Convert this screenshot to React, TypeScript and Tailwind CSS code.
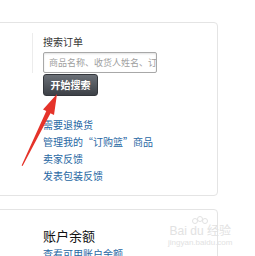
const links = ["需要退换货", "管理我的“订购篮”商品", "卖家反馈", "发表包装反馈"];

export default function App() {
    return (
        <div
            className="relative w-[255px] h-[256px] overflow-hidden bg-white"
            style={{ fontFamily: '"Noto Sans CJK SC", "Noto Sans", sans-serif' }}
        >
            <div className="pt-[22px] -ml-[6px] w-[224px] flex flex-col gap-[13px]">
                {/* order search card */}
                <div className="border border-[#e4e4e4] rounded-[4px] h-[174px] flex">
                    <div className="w-[38px] shrink-0 pt-[10px]">
                        <div className="h-[40px] border-r border-[#ececec]"></div>
                    </div>
                    <div className="pl-[10px] pt-[11px] flex flex-col items-start">
                        <div className="text-[10px] leading-[16px] text-[#333] mb-[2px]">搜索订单</div>
                        <div className="w-[114px] h-[21px] border border-[#a8a8a8] rounded-[2px] shadow-[inset_0_1px_2px_rgba(0,0,0,0.12)] pl-[5px] flex items-center overflow-hidden">
                            <span className="text-[9px] text-[#a0a0a0] whitespace-nowrap">商品名称、收货人姓名、订</span>
                        </div>
                        <button className="mt-[1px] w-[55px] h-[22px] rounded-[3px] bg-gradient-to-b from-[#6b7077] to-[#3d4147] border border-[#33363b] text-white text-[10px] font-bold leading-none flex items-center justify-center">
                            开始搜索
                        </button>
                        <div className="mt-[20px] flex flex-col">
                            {links.map((l) => (
                                <a key={l} className="text-[10px] leading-[17px] text-[#2767a3] whitespace-nowrap">{l}</a>
                            ))}
                        </div>
                    </div>
                </div>
                {/* balance card */}
                <div className="border border-[#e4e4e4] rounded-[4px] h-[80px] pl-[48px] pt-[16px]">
                    <div className="text-[13px] leading-[19px] text-[#111]">账户余额</div>
                    <a className="block text-[10px] leading-[17px] text-[#2767a3] whitespace-nowrap">查看可用账户余额</a>
                </div>
            </div>

            {/* watermark */}
            <div className="absolute left-[168px] top-[216px] flex flex-col items-center text-[#e2e2e2] pointer-events-none">
                <svg width="20" height="10" viewBox="0 0 20 10" className="-mb-[1px]">
                    <circle cx="5" cy="5" r="2.5" fill="none" stroke="#e2e2e2" />
                    <circle cx="10" cy="3" r="2.5" fill="none" stroke="#e2e2e2" />
                    <circle cx="15" cy="5" r="2.5" fill="none" stroke="#e2e2e2" />
                </svg>
                <div className="text-[12px] leading-[13px] whitespace-nowrap" style={{ fontFamily: '"Liberation Sans", "Noto Sans CJK SC", sans-serif' }}>Bai du 经验</div>
                <div className="text-[8px] leading-[10px] whitespace-nowrap" style={{ fontFamily: '"Liberation Sans", sans-serif' }}>jingyan.baidu.com</div>
            </div>

            {/* red arrow */}
            <svg className="absolute left-0 top-0 pointer-events-none" width="255" height="256">
                <polygon
                    points="57,94 54,115 50.5,113.3 22.6,166 21.6,165.5 46.3,111 43,109.6"
                    fill="#e5332a"
                />
            </svg>
        </div>
    );
}
